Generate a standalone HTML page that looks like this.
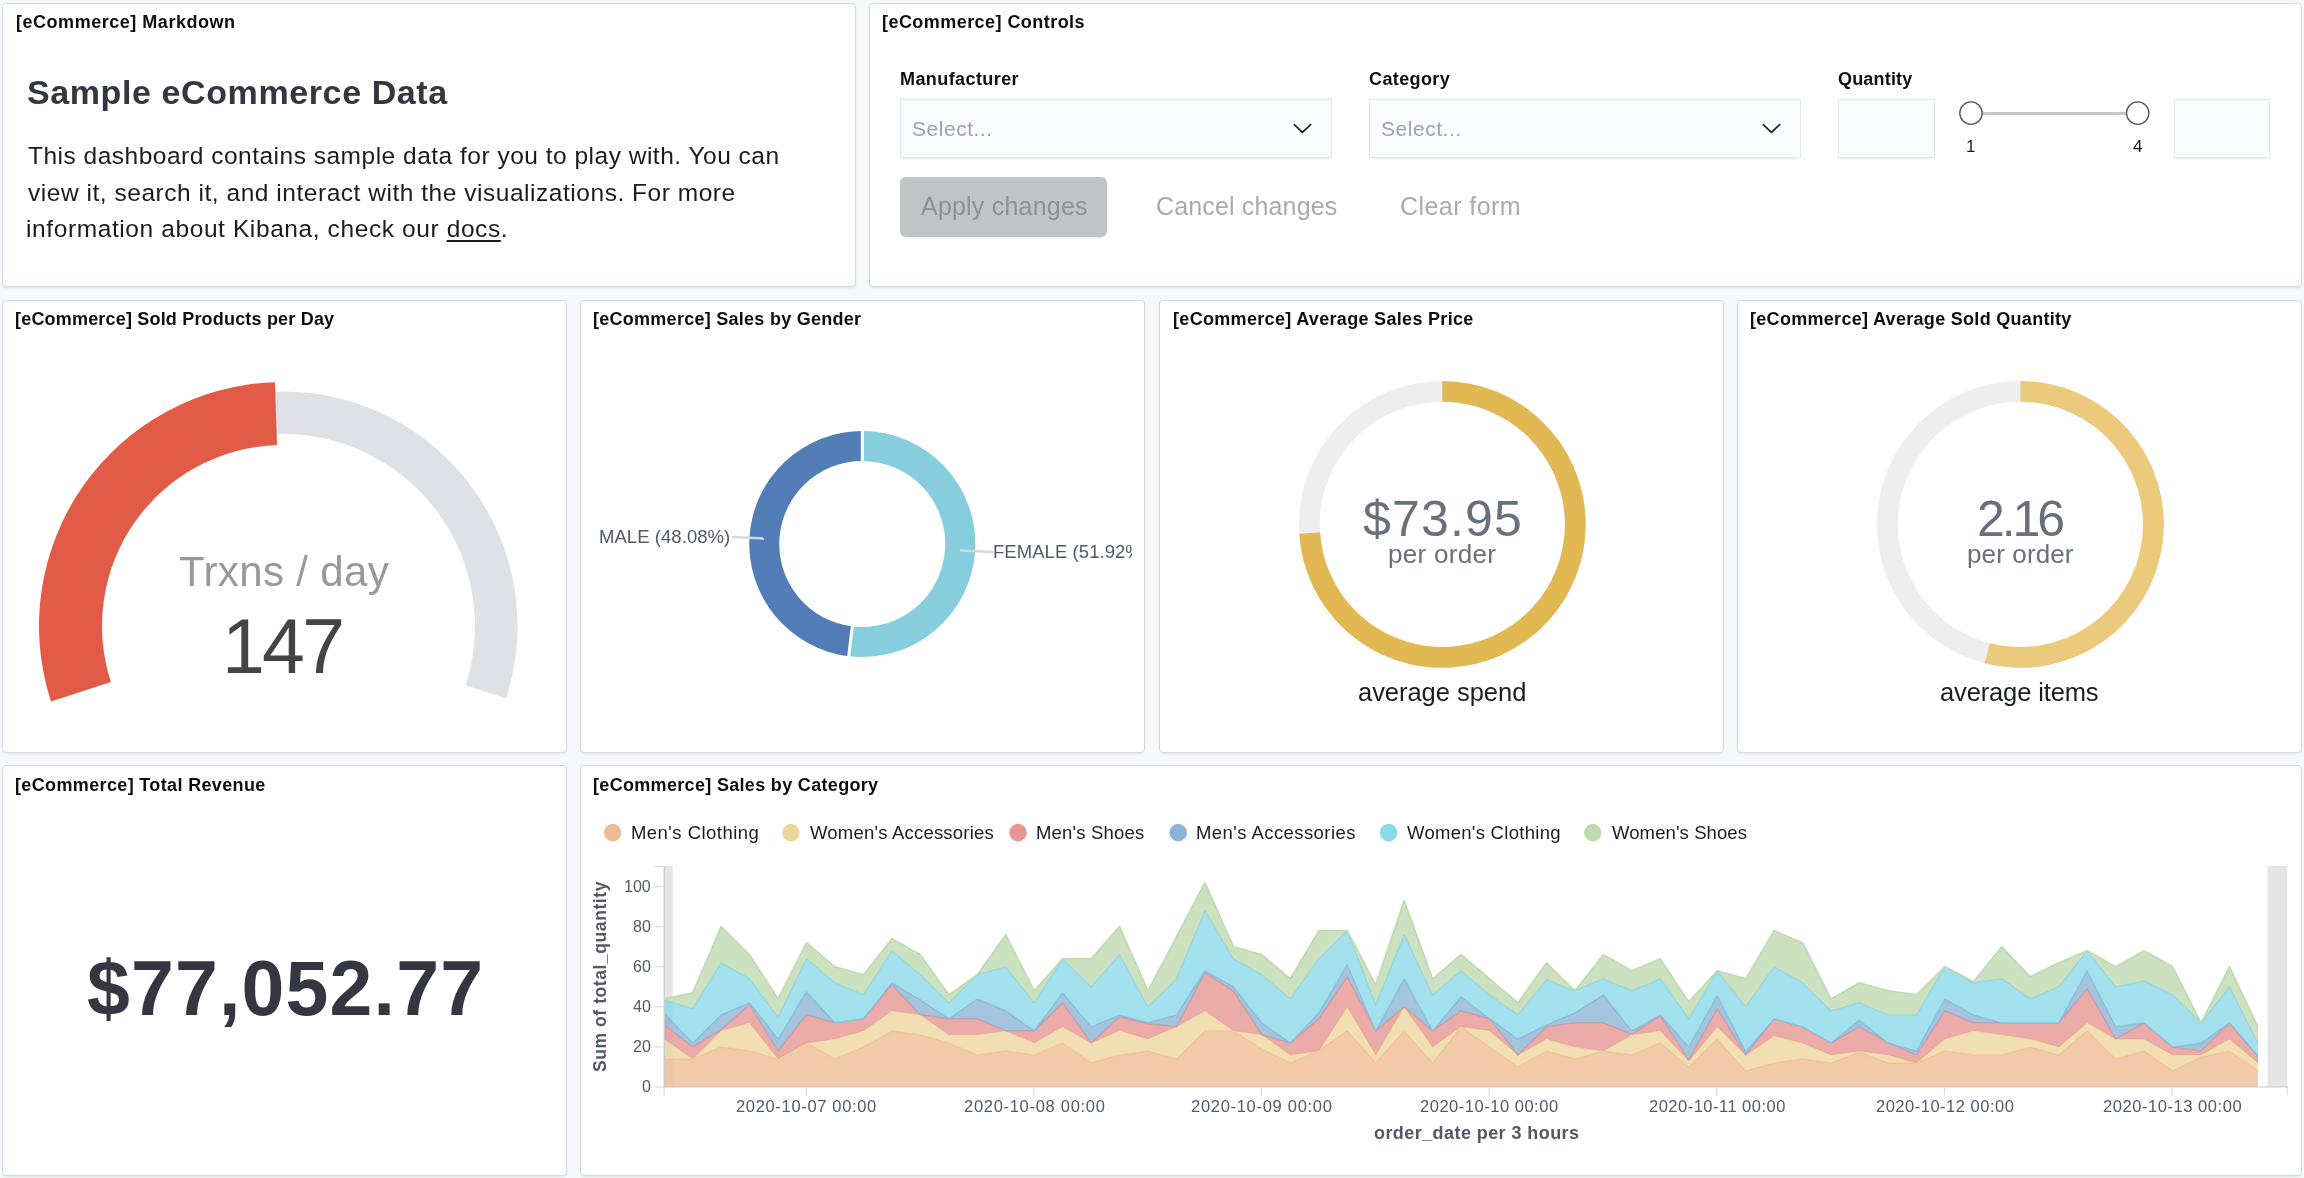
<!DOCTYPE html>
<html><head><meta charset="utf-8"><style>
html,body{margin:0;padding:0;width:2304px;height:1178px;overflow:hidden;background:#f7f8fb;}
body{position:relative;font-family:'Liberation Sans', sans-serif;}
.p{position:absolute;box-sizing:border-box;background:#fff;border:1px solid #d3dae6;border-radius:4px;box-shadow:0 1px 2px rgba(0,0,0,0.05),0 2px 3px -1px rgba(0,0,0,0.04);}
.t{position:absolute;will-change:transform;white-space:pre;line-height:1;font-family:'Liberation Sans', sans-serif;}
.in{position:absolute;box-sizing:border-box;background:#fbfcfd;box-shadow:inset 0 0 0 1px rgba(15,39,118,0.1),0 1px 1px -1px rgba(152,162,179,0.2),0 3px 2px -2px rgba(152,162,179,0.2);}
svg{position:absolute;left:0;top:0;}
</style></head><body>
<div class="p" style="left:2px;top:3px;width:854px;height:284px"></div><div class="p" style="left:869px;top:3px;width:1433px;height:284px"></div><div class="p" style="left:2px;top:300px;width:565px;height:453px"></div><div class="p" style="left:580px;top:300px;width:565px;height:453px"></div><div class="p" style="left:1159px;top:300px;width:565px;height:453px"></div><div class="p" style="left:1737px;top:300px;width:565px;height:453px"></div><div class="p" style="left:2px;top:765px;width:565px;height:411px"></div><div class="p" style="left:580px;top:765px;width:1722px;height:411px"></div>
<div class="in" style="left:900px;top:98.5px;width:432px;height:59.5px"></div><div class="in" style="left:1369px;top:98.5px;width:432px;height:59.5px"></div><div class="in" style="left:1838.3px;top:98.5px;width:96.29999999999995px;height:59.5px"></div><div class="in" style="left:2174px;top:98.5px;width:96.40000000000009px;height:59.5px"></div><div style="position:absolute;left:900px;top:177px;width:207px;height:60px;border-radius:6px;background:#c2c3c6;box-shadow:0 2px 2px -1px rgba(0,0,0,0.1)"></div>
<svg width="2304" height="1178" viewBox="0 0 2304 1178">
<path d="M59.98,698.46 A234.5,234.5 0 1 1 506.02,698.46 L465.60,685.33 A192,192 0 1 0 100.40,685.33 Z" fill="#e0e1e6"/><path d="M50.94,701.40 A244,244 0 0 1 274.91,382.13 L277.00,445.10 A181,181 0 0 0 110.86,681.93 Z" fill="#e25b47"/><path d="M862.30,431.00 A113,113 0 1 1 848.70,656.18 L852.31,626.40 A83,83 0 1 0 862.30,461.00 Z" fill="#86cede"/><path d="M848.70,656.18 A113,113 0 0 1 862.30,431.00 L862.30,461.00 A83,83 0 0 0 852.31,626.40 Z" fill="#527db7"/><line x1="862.30" y1="464.00" x2="862.30" y2="428.00" stroke="#fff" stroke-width="3"/><line x1="852.67" y1="623.42" x2="848.34" y2="659.16" stroke="#fff" stroke-width="3"/><polyline points="732,537 764,538.5" fill="none" stroke="#d5d8de" stroke-width="2.5"/><polyline points="960,550.4 993.4,552" fill="none" stroke="#d5d8de" stroke-width="2.5"/><circle cx="1442.3" cy="524.4" r="133" fill="none" stroke="#eeeeee" stroke-width="20.8"/><path d="M1442.30,381.00 A143.4,143.4 0 1 1 1299.21,533.85 L1319.97,532.48 A122.6,122.6 0 1 0 1442.30,401.80 Z" fill="#e2b852"/><circle cx="2020.4" cy="524.4" r="133" fill="none" stroke="#eeeeee" stroke-width="20.8"/><path d="M2020.40,381.00 A143.4,143.4 0 1 1 1984.74,663.29 L1989.91,643.15 A122.6,122.6 0 1 0 2020.40,401.80 Z" fill="#ecca7b"/><polyline points="1294.3,124.7 1302.4,132.4 1310.7,124.6" fill="none" stroke="#1a1c21" stroke-width="1.6" stroke-linecap="round" stroke-linejoin="round"/><polyline points="1763.3,124.7 1771.4,132.4 1779.7,124.6" fill="none" stroke="#1a1c21" stroke-width="1.6" stroke-linecap="round" stroke-linejoin="round"/><line x1="1982" y1="113.5" x2="2127" y2="113.5" stroke="#c6c8cc" stroke-width="3"/><circle cx="1971" cy="113.1" r="11.2" fill="#fff" stroke="#4d5361" stroke-width="1.3"/><circle cx="2137.7" cy="113.1" r="11.2" fill="#fff" stroke="#4d5361" stroke-width="1.3"/>
<rect x="664.2" y="866" width="8.5" height="221" fill="#000" fill-opacity="0.1"/><rect x="2267.5" y="866" width="19.8" height="221" fill="#000" fill-opacity="0.1"/><path d="M664.20,1058.93 L692.66,1058.93 L721.12,1046.90 L749.58,1050.91 L778.04,1058.93 L806.50,1042.89 L834.96,1058.93 L863.42,1046.90 L891.88,1030.86 L920.34,1034.87 L948.80,1042.89 L977.26,1054.92 L1005.72,1050.91 L1034.18,1054.92 L1062.64,1042.89 L1091.10,1062.94 L1119.56,1054.92 L1148.02,1050.91 L1176.48,1058.93 L1204.94,1030.86 L1233.40,1030.86 L1261.86,1048.90 L1290.32,1062.94 L1318.78,1050.91 L1347.24,1030.86 L1375.70,1062.94 L1404.16,1030.86 L1432.62,1062.94 L1461.08,1026.85 L1489.54,1046.90 L1518.00,1066.95 L1546.46,1050.91 L1574.92,1058.93 L1603.38,1050.91 L1631.84,1054.92 L1660.30,1042.89 L1688.76,1066.95 L1717.22,1038.88 L1745.68,1070.96 L1774.14,1062.94 L1802.60,1058.93 L1831.06,1062.94 L1859.52,1051.91 L1887.98,1062.94 L1916.44,1062.94 L1944.90,1050.91 L1973.36,1054.92 L2001.82,1054.92 L2030.28,1046.90 L2058.74,1054.92 L2087.20,1030.86 L2115.66,1058.93 L2144.12,1050.91 L2172.58,1070.96 L2201.04,1056.92 L2229.50,1050.91 L2257.96,1070.96 L2257.96,1087.00 L2229.50,1087.00 L2201.04,1087.00 L2172.58,1087.00 L2144.12,1087.00 L2115.66,1087.00 L2087.20,1087.00 L2058.74,1087.00 L2030.28,1087.00 L2001.82,1087.00 L1973.36,1087.00 L1944.90,1087.00 L1916.44,1087.00 L1887.98,1087.00 L1859.52,1087.00 L1831.06,1087.00 L1802.60,1087.00 L1774.14,1087.00 L1745.68,1087.00 L1717.22,1087.00 L1688.76,1087.00 L1660.30,1087.00 L1631.84,1087.00 L1603.38,1087.00 L1574.92,1087.00 L1546.46,1087.00 L1518.00,1087.00 L1489.54,1087.00 L1461.08,1087.00 L1432.62,1087.00 L1404.16,1087.00 L1375.70,1087.00 L1347.24,1087.00 L1318.78,1087.00 L1290.32,1087.00 L1261.86,1087.00 L1233.40,1087.00 L1204.94,1087.00 L1176.48,1087.00 L1148.02,1087.00 L1119.56,1087.00 L1091.10,1087.00 L1062.64,1087.00 L1034.18,1087.00 L1005.72,1087.00 L977.26,1087.00 L948.80,1087.00 L920.34,1087.00 L891.88,1087.00 L863.42,1087.00 L834.96,1087.00 L806.50,1087.00 L778.04,1087.00 L749.58,1087.00 L721.12,1087.00 L692.66,1087.00 L664.20,1087.00 Z" fill="#efbd95" fill-opacity="0.8" stroke="none"/><path d="M664.20,1058.93 L692.66,1058.93 L721.12,1046.90 L749.58,1050.91 L778.04,1058.93 L806.50,1042.89 L834.96,1058.93 L863.42,1046.90 L891.88,1030.86 L920.34,1034.87 L948.80,1042.89 L977.26,1054.92 L1005.72,1050.91 L1034.18,1054.92 L1062.64,1042.89 L1091.10,1062.94 L1119.56,1054.92 L1148.02,1050.91 L1176.48,1058.93 L1204.94,1030.86 L1233.40,1030.86 L1261.86,1048.90 L1290.32,1062.94 L1318.78,1050.91 L1347.24,1030.86 L1375.70,1062.94 L1404.16,1030.86 L1432.62,1062.94 L1461.08,1026.85 L1489.54,1046.90 L1518.00,1066.95 L1546.46,1050.91 L1574.92,1058.93 L1603.38,1050.91 L1631.84,1054.92 L1660.30,1042.89 L1688.76,1066.95 L1717.22,1038.88 L1745.68,1070.96 L1774.14,1062.94 L1802.60,1058.93 L1831.06,1062.94 L1859.52,1051.91 L1887.98,1062.94 L1916.44,1062.94 L1944.90,1050.91 L1973.36,1054.92 L2001.82,1054.92 L2030.28,1046.90 L2058.74,1054.92 L2087.20,1030.86 L2115.66,1058.93 L2144.12,1050.91 L2172.58,1070.96 L2201.04,1056.92 L2229.50,1050.91 L2257.96,1070.96" fill="none" stroke="#efbd95" stroke-width="1.5" stroke-linejoin="round"/><path d="M664.20,1038.88 L692.66,1058.93 L721.12,1030.86 L749.58,1022.84 L778.04,1058.93 L806.50,1042.89 L834.96,1038.88 L863.42,1030.86 L891.88,1010.81 L920.34,1014.82 L948.80,1034.87 L977.26,1034.87 L1005.72,1030.86 L1034.18,1042.89 L1062.64,1026.85 L1091.10,1042.89 L1119.56,1030.86 L1148.02,1038.88 L1176.48,1026.85 L1204.94,1010.81 L1233.40,1030.86 L1261.86,1034.87 L1290.32,1054.92 L1318.78,1050.91 L1347.24,1006.80 L1375.70,1054.92 L1404.16,1006.80 L1432.62,1046.90 L1461.08,1026.85 L1489.54,1030.86 L1518.00,1054.92 L1546.46,1038.88 L1574.92,1046.90 L1603.38,1050.91 L1631.84,1034.87 L1660.30,1030.86 L1688.76,1060.93 L1717.22,1026.85 L1745.68,1054.92 L1774.14,1035.87 L1802.60,1042.89 L1831.06,1054.92 L1859.52,1050.91 L1887.98,1054.92 L1916.44,1062.94 L1944.90,1038.88 L1973.36,1030.86 L2001.82,1034.87 L2030.28,1038.88 L2058.74,1046.90 L2087.20,1022.84 L2115.66,1038.88 L2144.12,1038.88 L2172.58,1054.92 L2201.04,1054.92 L2229.50,1038.88 L2257.96,1062.94 L2257.96,1070.96 L2229.50,1050.91 L2201.04,1056.92 L2172.58,1070.96 L2144.12,1050.91 L2115.66,1058.93 L2087.20,1030.86 L2058.74,1054.92 L2030.28,1046.90 L2001.82,1054.92 L1973.36,1054.92 L1944.90,1050.91 L1916.44,1062.94 L1887.98,1062.94 L1859.52,1051.91 L1831.06,1062.94 L1802.60,1058.93 L1774.14,1062.94 L1745.68,1070.96 L1717.22,1038.88 L1688.76,1066.95 L1660.30,1042.89 L1631.84,1054.92 L1603.38,1050.91 L1574.92,1058.93 L1546.46,1050.91 L1518.00,1066.95 L1489.54,1046.90 L1461.08,1026.85 L1432.62,1062.94 L1404.16,1030.86 L1375.70,1062.94 L1347.24,1030.86 L1318.78,1050.91 L1290.32,1062.94 L1261.86,1048.90 L1233.40,1030.86 L1204.94,1030.86 L1176.48,1058.93 L1148.02,1050.91 L1119.56,1054.92 L1091.10,1062.94 L1062.64,1042.89 L1034.18,1054.92 L1005.72,1050.91 L977.26,1054.92 L948.80,1042.89 L920.34,1034.87 L891.88,1030.86 L863.42,1046.90 L834.96,1058.93 L806.50,1042.89 L778.04,1058.93 L749.58,1050.91 L721.12,1046.90 L692.66,1058.93 L664.20,1058.93 Z" fill="#efd6a0" fill-opacity="0.8" stroke="none"/><path d="M664.20,1038.88 L692.66,1058.93 L721.12,1030.86 L749.58,1022.84 L778.04,1058.93 L806.50,1042.89 L834.96,1038.88 L863.42,1030.86 L891.88,1010.81 L920.34,1014.82 L948.80,1034.87 L977.26,1034.87 L1005.72,1030.86 L1034.18,1042.89 L1062.64,1026.85 L1091.10,1042.89 L1119.56,1030.86 L1148.02,1038.88 L1176.48,1026.85 L1204.94,1010.81 L1233.40,1030.86 L1261.86,1034.87 L1290.32,1054.92 L1318.78,1050.91 L1347.24,1006.80 L1375.70,1054.92 L1404.16,1006.80 L1432.62,1046.90 L1461.08,1026.85 L1489.54,1030.86 L1518.00,1054.92 L1546.46,1038.88 L1574.92,1046.90 L1603.38,1050.91 L1631.84,1034.87 L1660.30,1030.86 L1688.76,1060.93 L1717.22,1026.85 L1745.68,1054.92 L1774.14,1035.87 L1802.60,1042.89 L1831.06,1054.92 L1859.52,1050.91 L1887.98,1054.92 L1916.44,1062.94 L1944.90,1038.88 L1973.36,1030.86 L2001.82,1034.87 L2030.28,1038.88 L2058.74,1046.90 L2087.20,1022.84 L2115.66,1038.88 L2144.12,1038.88 L2172.58,1054.92 L2201.04,1054.92 L2229.50,1038.88 L2257.96,1062.94" fill="none" stroke="#efd6a0" stroke-width="1.5" stroke-linejoin="round"/><path d="M664.20,1024.85 L692.66,1046.90 L721.12,1029.66 L749.58,1004.79 L778.04,1050.91 L806.50,1014.82 L834.96,1022.84 L863.42,1018.83 L891.88,984.75 L920.34,1014.82 L948.80,1018.83 L977.26,1018.83 L1005.72,1030.86 L1034.18,1030.86 L1062.64,1002.79 L1091.10,1042.89 L1119.56,1016.83 L1148.02,1023.84 L1176.48,1026.85 L1204.94,972.72 L1233.40,990.76 L1261.86,1034.87 L1290.32,1042.89 L1318.78,1018.83 L1347.24,976.73 L1375.70,1030.86 L1404.16,1006.80 L1432.62,1030.86 L1461.08,1010.81 L1489.54,1018.83 L1518.00,1054.92 L1546.46,1026.85 L1574.92,1022.84 L1603.38,1022.84 L1631.84,1034.27 L1660.30,1015.82 L1688.76,1059.93 L1717.22,1008.81 L1745.68,1054.92 L1774.14,1018.83 L1802.60,1026.85 L1831.06,1042.89 L1859.52,1026.85 L1887.98,1042.89 L1916.44,1054.92 L1944.90,1010.81 L1973.36,1022.84 L2001.82,1022.84 L2030.28,1022.84 L2058.74,1022.84 L2087.20,988.75 L2115.66,1038.88 L2144.12,1022.84 L2172.58,1046.90 L2201.04,1050.91 L2229.50,1022.84 L2257.96,1056.92 L2257.96,1062.94 L2229.50,1038.88 L2201.04,1054.92 L2172.58,1054.92 L2144.12,1038.88 L2115.66,1038.88 L2087.20,1022.84 L2058.74,1046.90 L2030.28,1038.88 L2001.82,1034.87 L1973.36,1030.86 L1944.90,1038.88 L1916.44,1062.94 L1887.98,1054.92 L1859.52,1050.91 L1831.06,1054.92 L1802.60,1042.89 L1774.14,1035.87 L1745.68,1054.92 L1717.22,1026.85 L1688.76,1060.93 L1660.30,1030.86 L1631.84,1034.87 L1603.38,1050.91 L1574.92,1046.90 L1546.46,1038.88 L1518.00,1054.92 L1489.54,1030.86 L1461.08,1026.85 L1432.62,1046.90 L1404.16,1006.80 L1375.70,1054.92 L1347.24,1006.80 L1318.78,1050.91 L1290.32,1054.92 L1261.86,1034.87 L1233.40,1030.86 L1204.94,1010.81 L1176.48,1026.85 L1148.02,1038.88 L1119.56,1030.86 L1091.10,1042.89 L1062.64,1026.85 L1034.18,1042.89 L1005.72,1030.86 L977.26,1034.87 L948.80,1034.87 L920.34,1014.82 L891.88,1010.81 L863.42,1030.86 L834.96,1038.88 L806.50,1042.89 L778.04,1058.93 L749.58,1022.84 L721.12,1030.86 L692.66,1058.93 L664.20,1038.88 Z" fill="#e59693" fill-opacity="0.8" stroke="none"/><path d="M664.20,1024.85 L692.66,1046.90 L721.12,1029.66 L749.58,1004.79 L778.04,1050.91 L806.50,1014.82 L834.96,1022.84 L863.42,1018.83 L891.88,984.75 L920.34,1014.82 L948.80,1018.83 L977.26,1018.83 L1005.72,1030.86 L1034.18,1030.86 L1062.64,1002.79 L1091.10,1042.89 L1119.56,1016.83 L1148.02,1023.84 L1176.48,1026.85 L1204.94,972.72 L1233.40,990.76 L1261.86,1034.87 L1290.32,1042.89 L1318.78,1018.83 L1347.24,976.73 L1375.70,1030.86 L1404.16,1006.80 L1432.62,1030.86 L1461.08,1010.81 L1489.54,1018.83 L1518.00,1054.92 L1546.46,1026.85 L1574.92,1022.84 L1603.38,1022.84 L1631.84,1034.27 L1660.30,1015.82 L1688.76,1059.93 L1717.22,1008.81 L1745.68,1054.92 L1774.14,1018.83 L1802.60,1026.85 L1831.06,1042.89 L1859.52,1026.85 L1887.98,1042.89 L1916.44,1054.92 L1944.90,1010.81 L1973.36,1022.84 L2001.82,1022.84 L2030.28,1022.84 L2058.74,1022.84 L2087.20,988.75 L2115.66,1038.88 L2144.12,1022.84 L2172.58,1046.90 L2201.04,1050.91 L2229.50,1022.84 L2257.96,1056.92" fill="none" stroke="#e59693" stroke-width="1.5" stroke-linejoin="round"/><path d="M664.20,1012.82 L692.66,1042.89 L721.12,1014.82 L749.58,1002.79 L778.04,1038.88 L806.50,991.76 L834.96,1022.84 L863.42,1018.83 L891.88,982.74 L920.34,999.78 L948.80,1018.83 L977.26,998.78 L1005.72,1010.81 L1034.18,1030.86 L1062.64,992.76 L1091.10,1026.85 L1119.56,1014.82 L1148.02,1022.84 L1176.48,1014.82 L1204.94,970.71 L1233.40,986.75 L1261.86,1022.84 L1290.32,1042.89 L1318.78,1012.82 L1347.24,964.70 L1375.70,1030.86 L1404.16,978.73 L1432.62,1030.86 L1461.08,996.77 L1489.54,1018.83 L1518.00,1038.88 L1546.46,1024.85 L1574.92,1012.82 L1603.38,994.77 L1631.84,1030.86 L1660.30,1014.82 L1688.76,1046.90 L1717.22,995.17 L1745.68,1051.51 L1774.14,1018.83 L1802.60,1026.85 L1831.06,1042.89 L1859.52,1020.03 L1887.98,1042.89 L1916.44,1050.91 L1944.90,998.78 L1973.36,1014.82 L2001.82,1022.84 L2030.28,1022.84 L2058.74,1022.84 L2087.20,970.71 L2115.66,1026.85 L2144.12,1022.84 L2172.58,1046.90 L2201.04,1042.89 L2229.50,1022.84 L2257.96,1055.72 L2257.96,1056.92 L2229.50,1022.84 L2201.04,1050.91 L2172.58,1046.90 L2144.12,1022.84 L2115.66,1038.88 L2087.20,988.75 L2058.74,1022.84 L2030.28,1022.84 L2001.82,1022.84 L1973.36,1022.84 L1944.90,1010.81 L1916.44,1054.92 L1887.98,1042.89 L1859.52,1026.85 L1831.06,1042.89 L1802.60,1026.85 L1774.14,1018.83 L1745.68,1054.92 L1717.22,1008.81 L1688.76,1059.93 L1660.30,1015.82 L1631.84,1034.27 L1603.38,1022.84 L1574.92,1022.84 L1546.46,1026.85 L1518.00,1054.92 L1489.54,1018.83 L1461.08,1010.81 L1432.62,1030.86 L1404.16,1006.80 L1375.70,1030.86 L1347.24,976.73 L1318.78,1018.83 L1290.32,1042.89 L1261.86,1034.87 L1233.40,990.76 L1204.94,972.72 L1176.48,1026.85 L1148.02,1023.84 L1119.56,1016.83 L1091.10,1042.89 L1062.64,1002.79 L1034.18,1030.86 L1005.72,1030.86 L977.26,1018.83 L948.80,1018.83 L920.34,1014.82 L891.88,984.75 L863.42,1018.83 L834.96,1022.84 L806.50,1014.82 L778.04,1050.91 L749.58,1004.79 L721.12,1029.66 L692.66,1046.90 L664.20,1024.85 Z" fill="#8db4d5" fill-opacity="0.8" stroke="none"/><path d="M664.20,1012.82 L692.66,1042.89 L721.12,1014.82 L749.58,1002.79 L778.04,1038.88 L806.50,991.76 L834.96,1022.84 L863.42,1018.83 L891.88,982.74 L920.34,999.78 L948.80,1018.83 L977.26,998.78 L1005.72,1010.81 L1034.18,1030.86 L1062.64,992.76 L1091.10,1026.85 L1119.56,1014.82 L1148.02,1022.84 L1176.48,1014.82 L1204.94,970.71 L1233.40,986.75 L1261.86,1022.84 L1290.32,1042.89 L1318.78,1012.82 L1347.24,964.70 L1375.70,1030.86 L1404.16,978.73 L1432.62,1030.86 L1461.08,996.77 L1489.54,1018.83 L1518.00,1038.88 L1546.46,1024.85 L1574.92,1012.82 L1603.38,994.77 L1631.84,1030.86 L1660.30,1014.82 L1688.76,1046.90 L1717.22,995.17 L1745.68,1051.51 L1774.14,1018.83 L1802.60,1026.85 L1831.06,1042.89 L1859.52,1020.03 L1887.98,1042.89 L1916.44,1050.91 L1944.90,998.78 L1973.36,1014.82 L2001.82,1022.84 L2030.28,1022.84 L2058.74,1022.84 L2087.20,970.71 L2115.66,1026.85 L2144.12,1022.84 L2172.58,1046.90 L2201.04,1042.89 L2229.50,1022.84 L2257.96,1055.72" fill="none" stroke="#8db4d5" stroke-width="1.5" stroke-linejoin="round"/><path d="M664.20,999.78 L692.66,1008.81 L721.12,962.69 L749.58,978.73 L778.04,1016.83 L806.50,958.68 L834.96,982.74 L863.42,994.77 L891.88,950.66 L920.34,974.72 L948.80,1002.79 L977.26,974.72 L1005.72,966.70 L1034.18,1002.79 L1062.64,958.68 L1091.10,986.75 L1119.56,954.67 L1148.02,1006.80 L1176.48,978.73 L1204.94,910.56 L1233.40,958.68 L1261.86,974.72 L1290.32,998.78 L1318.78,958.68 L1347.24,930.61 L1375.70,1004.79 L1404.16,934.62 L1432.62,994.77 L1461.08,970.71 L1489.54,994.77 L1518.00,1014.82 L1546.46,979.73 L1574.92,990.76 L1603.38,978.73 L1631.84,990.76 L1660.30,978.73 L1688.76,1018.83 L1717.22,970.71 L1745.68,1006.80 L1774.14,966.70 L1802.60,982.74 L1831.06,1010.81 L1859.52,1002.79 L1887.98,1014.82 L1916.44,1014.82 L1944.90,966.70 L1973.36,982.74 L2001.82,978.73 L2030.28,998.78 L2058.74,986.75 L2087.20,950.66 L2115.66,986.75 L2144.12,980.74 L2172.58,994.77 L2201.04,1022.84 L2229.50,986.75 L2257.96,1042.89 L2257.96,1055.72 L2229.50,1022.84 L2201.04,1042.89 L2172.58,1046.90 L2144.12,1022.84 L2115.66,1026.85 L2087.20,970.71 L2058.74,1022.84 L2030.28,1022.84 L2001.82,1022.84 L1973.36,1014.82 L1944.90,998.78 L1916.44,1050.91 L1887.98,1042.89 L1859.52,1020.03 L1831.06,1042.89 L1802.60,1026.85 L1774.14,1018.83 L1745.68,1051.51 L1717.22,995.17 L1688.76,1046.90 L1660.30,1014.82 L1631.84,1030.86 L1603.38,994.77 L1574.92,1012.82 L1546.46,1024.85 L1518.00,1038.88 L1489.54,1018.83 L1461.08,996.77 L1432.62,1030.86 L1404.16,978.73 L1375.70,1030.86 L1347.24,964.70 L1318.78,1012.82 L1290.32,1042.89 L1261.86,1022.84 L1233.40,986.75 L1204.94,970.71 L1176.48,1014.82 L1148.02,1022.84 L1119.56,1014.82 L1091.10,1026.85 L1062.64,992.76 L1034.18,1030.86 L1005.72,1010.81 L977.26,998.78 L948.80,1018.83 L920.34,999.78 L891.88,982.74 L863.42,1018.83 L834.96,1022.84 L806.50,991.76 L778.04,1038.88 L749.58,1002.79 L721.12,1014.82 L692.66,1042.89 L664.20,1012.82 Z" fill="#8bd8ea" fill-opacity="0.8" stroke="none"/><path d="M664.20,999.78 L692.66,1008.81 L721.12,962.69 L749.58,978.73 L778.04,1016.83 L806.50,958.68 L834.96,982.74 L863.42,994.77 L891.88,950.66 L920.34,974.72 L948.80,1002.79 L977.26,974.72 L1005.72,966.70 L1034.18,1002.79 L1062.64,958.68 L1091.10,986.75 L1119.56,954.67 L1148.02,1006.80 L1176.48,978.73 L1204.94,910.56 L1233.40,958.68 L1261.86,974.72 L1290.32,998.78 L1318.78,958.68 L1347.24,930.61 L1375.70,1004.79 L1404.16,934.62 L1432.62,994.77 L1461.08,970.71 L1489.54,994.77 L1518.00,1014.82 L1546.46,979.73 L1574.92,990.76 L1603.38,978.73 L1631.84,990.76 L1660.30,978.73 L1688.76,1018.83 L1717.22,970.71 L1745.68,1006.80 L1774.14,966.70 L1802.60,982.74 L1831.06,1010.81 L1859.52,1002.79 L1887.98,1014.82 L1916.44,1014.82 L1944.90,966.70 L1973.36,982.74 L2001.82,978.73 L2030.28,998.78 L2058.74,986.75 L2087.20,950.66 L2115.66,986.75 L2144.12,980.74 L2172.58,994.77 L2201.04,1022.84 L2229.50,986.75 L2257.96,1042.89" fill="none" stroke="#8bd8ea" stroke-width="1.5" stroke-linejoin="round"/><path d="M664.20,998.78 L692.66,992.76 L721.12,926.60 L749.58,954.67 L778.04,998.78 L806.50,942.64 L834.96,966.70 L863.42,974.72 L891.88,938.63 L920.34,954.67 L948.80,994.77 L977.26,974.72 L1005.72,934.62 L1034.18,990.76 L1062.64,958.68 L1091.10,958.68 L1119.56,926.60 L1148.02,990.76 L1176.48,936.62 L1204.94,882.49 L1233.40,946.65 L1261.86,954.67 L1290.32,978.73 L1318.78,930.61 L1347.24,930.61 L1375.70,984.75 L1404.16,900.53 L1432.62,978.73 L1461.08,954.67 L1489.54,978.73 L1518.00,1002.79 L1546.46,962.69 L1574.92,990.76 L1603.38,954.67 L1631.84,970.71 L1660.30,958.68 L1688.76,1001.79 L1717.22,970.71 L1745.68,978.73 L1774.14,930.61 L1802.60,942.64 L1831.06,998.78 L1859.52,982.74 L1887.98,990.76 L1916.44,994.77 L1944.90,966.70 L1973.36,981.74 L2001.82,946.65 L2030.28,976.73 L2058.74,962.69 L2087.20,950.66 L2115.66,966.70 L2144.12,950.66 L2172.58,966.70 L2201.04,1022.84 L2229.50,966.70 L2257.96,1026.85 L2257.96,1042.89 L2229.50,986.75 L2201.04,1022.84 L2172.58,994.77 L2144.12,980.74 L2115.66,986.75 L2087.20,950.66 L2058.74,986.75 L2030.28,998.78 L2001.82,978.73 L1973.36,982.74 L1944.90,966.70 L1916.44,1014.82 L1887.98,1014.82 L1859.52,1002.79 L1831.06,1010.81 L1802.60,982.74 L1774.14,966.70 L1745.68,1006.80 L1717.22,970.71 L1688.76,1018.83 L1660.30,978.73 L1631.84,990.76 L1603.38,978.73 L1574.92,990.76 L1546.46,979.73 L1518.00,1014.82 L1489.54,994.77 L1461.08,970.71 L1432.62,994.77 L1404.16,934.62 L1375.70,1004.79 L1347.24,930.61 L1318.78,958.68 L1290.32,998.78 L1261.86,974.72 L1233.40,958.68 L1204.94,910.56 L1176.48,978.73 L1148.02,1006.80 L1119.56,954.67 L1091.10,986.75 L1062.64,958.68 L1034.18,1002.79 L1005.72,966.70 L977.26,974.72 L948.80,1002.79 L920.34,974.72 L891.88,950.66 L863.42,994.77 L834.96,982.74 L806.50,958.68 L778.04,1016.83 L749.58,978.73 L721.12,962.69 L692.66,1008.81 L664.20,999.78 Z" fill="#bedaaf" fill-opacity="0.8" stroke="none"/><path d="M664.20,998.78 L692.66,992.76 L721.12,926.60 L749.58,954.67 L778.04,998.78 L806.50,942.64 L834.96,966.70 L863.42,974.72 L891.88,938.63 L920.34,954.67 L948.80,994.77 L977.26,974.72 L1005.72,934.62 L1034.18,990.76 L1062.64,958.68 L1091.10,958.68 L1119.56,926.60 L1148.02,990.76 L1176.48,936.62 L1204.94,882.49 L1233.40,946.65 L1261.86,954.67 L1290.32,978.73 L1318.78,930.61 L1347.24,930.61 L1375.70,984.75 L1404.16,900.53 L1432.62,978.73 L1461.08,954.67 L1489.54,978.73 L1518.00,1002.79 L1546.46,962.69 L1574.92,990.76 L1603.38,954.67 L1631.84,970.71 L1660.30,958.68 L1688.76,1001.79 L1717.22,970.71 L1745.68,978.73 L1774.14,930.61 L1802.60,942.64 L1831.06,998.78 L1859.52,982.74 L1887.98,990.76 L1916.44,994.77 L1944.90,966.70 L1973.36,981.74 L2001.82,946.65 L2030.28,976.73 L2058.74,962.69 L2087.20,950.66 L2115.66,966.70 L2144.12,950.66 L2172.58,966.70 L2201.04,1022.84 L2229.50,966.70 L2257.96,1026.85" fill="none" stroke="#bedaaf" stroke-width="1.5" stroke-linejoin="round"/><line x1="664.2" y1="866.5" x2="664.2" y2="1087" stroke="#c8c9cb" stroke-width="1.2"/><line x1="664.2" y1="1087" x2="2287.3" y2="1087" stroke="#c8c9cb" stroke-width="1.2"/><line x1="655" y1="1087.00" x2="664.2" y2="1087.00" stroke="#d9dadc" stroke-width="1.2"/><line x1="655" y1="1046.90" x2="664.2" y2="1046.90" stroke="#d9dadc" stroke-width="1.2"/><line x1="655" y1="1006.80" x2="664.2" y2="1006.80" stroke="#d9dadc" stroke-width="1.2"/><line x1="655" y1="966.70" x2="664.2" y2="966.70" stroke="#d9dadc" stroke-width="1.2"/><line x1="655" y1="926.60" x2="664.2" y2="926.60" stroke="#d9dadc" stroke-width="1.2"/><line x1="655" y1="886.50" x2="664.2" y2="886.50" stroke="#d9dadc" stroke-width="1.2"/><line x1="655" y1="866.50" x2="664.2" y2="866.50" stroke="#d9dadc" stroke-width="1.2"/><line x1="664.20" y1="1087" x2="664.20" y2="1095.5" stroke="#d9dadc" stroke-width="1.2"/><line x1="806.25" y1="1087" x2="806.25" y2="1095.5" stroke="#d9dadc" stroke-width="1.2"/><line x1="1033.90" y1="1087" x2="1033.90" y2="1095.5" stroke="#d9dadc" stroke-width="1.2"/><line x1="1261.55" y1="1087" x2="1261.55" y2="1095.5" stroke="#d9dadc" stroke-width="1.2"/><line x1="1489.20" y1="1087" x2="1489.20" y2="1095.5" stroke="#d9dadc" stroke-width="1.2"/><line x1="1716.85" y1="1087" x2="1716.85" y2="1095.5" stroke="#d9dadc" stroke-width="1.2"/><line x1="1944.50" y1="1087" x2="1944.50" y2="1095.5" stroke="#d9dadc" stroke-width="1.2"/><line x1="2172.15" y1="1087" x2="2172.15" y2="1095.5" stroke="#d9dadc" stroke-width="1.2"/><line x1="2287.30" y1="1087" x2="2287.30" y2="1095.5" stroke="#d9dadc" stroke-width="1.2"/><circle cx="612.6" cy="832.6" r="8.8" fill="#efbd95"/><circle cx="790.9" cy="832.6" r="8.8" fill="#efd6a0"/><circle cx="1018" cy="832.6" r="8.8" fill="#e59693"/><circle cx="1178.2" cy="832.6" r="8.8" fill="#8db4d5"/><circle cx="1388.6" cy="832.6" r="8.8" fill="#8bd8ea"/><circle cx="1592.8" cy="832.6" r="8.8" fill="#bedaaf"/>
</svg>
<div class="t" style="left:16.00px;top:13.00px;font-size:18px;font-weight:700;color:#0d0e11;letter-spacing:0.526px;">[eCommerce] Markdown</div><div class="t" style="left:881.50px;top:13.00px;font-size:18px;font-weight:700;color:#0d0e11;letter-spacing:0.447px;">[eCommerce] Controls</div><div class="t" style="left:15.40px;top:310.00px;font-size:18px;font-weight:700;color:#0d0e11;letter-spacing:0.188px;">[eCommerce] Sold Products per Day</div><div class="t" style="left:593.10px;top:310.00px;font-size:18px;font-weight:700;color:#0d0e11;letter-spacing:0.269px;">[eCommerce] Sales by Gender</div><div class="t" style="left:1172.50px;top:310.00px;font-size:18px;font-weight:700;color:#0d0e11;letter-spacing:0.317px;">[eCommerce] Average Sales Price</div><div class="t" style="left:1750.00px;top:310.00px;font-size:18px;font-weight:700;color:#0d0e11;letter-spacing:0.300px;">[eCommerce] Average Sold Quantity</div><div class="t" style="left:15.00px;top:776.00px;font-size:18px;font-weight:700;color:#0d0e11;letter-spacing:0.358px;">[eCommerce] Total Revenue</div><div class="t" style="left:593.00px;top:776.00px;font-size:18px;font-weight:700;color:#0d0e11;letter-spacing:0.321px;">[eCommerce] Sales by Category</div><div class="t" style="left:27.00px;top:74.70px;font-size:34px;font-weight:700;color:#343741;letter-spacing:0.600px;">Sample eCommerce Data</div><div class="t" style="left:28.00px;top:144.30px;font-size:24.5px;font-weight:400;color:#1a1c21;letter-spacing:0.500px;">This dashboard contains sample data for you to play with. You can</div><div class="t" style="left:28.00px;top:180.70px;font-size:24.5px;font-weight:400;color:#1a1c21;letter-spacing:0.531px;">view it, search it, and interact with the visualizations. For more</div><div class="t" style="left:26.00px;top:216.80px;font-size:24.5px;font-weight:400;color:#1a1c21;letter-spacing:0.600px;">information about Kibana, check our <span style="text-decoration:underline;text-underline-offset:3px">docs</span>.</div><div class="t" style="left:899.70px;top:69.80px;font-size:18px;font-weight:700;color:#0d0e11;letter-spacing:0.418px;">Manufacturer</div><div class="t" style="left:1368.60px;top:69.80px;font-size:18px;font-weight:700;color:#0d0e11;letter-spacing:0.386px;">Category</div><div class="t" style="left:1837.75px;top:70.00px;font-size:18px;font-weight:700;color:#0d0e11;letter-spacing:0.179px;">Quantity</div><div class="t" style="left:912.00px;top:118.20px;font-size:21px;font-weight:400;color:#98a2b3;letter-spacing:0.537px;">Select...</div><div class="t" style="left:1381.00px;top:118.20px;font-size:21px;font-weight:400;color:#98a2b3;letter-spacing:0.537px;">Select...</div><div class="t" style="left:1966.00px;top:138.30px;font-size:17px;font-weight:400;color:#1a1c21;letter-spacing:0.000px;">1</div><div class="t" style="left:2133.20px;top:138.30px;font-size:17px;font-weight:400;color:#1a1c21;letter-spacing:0.000px;">4</div><div class="t" style="left:920.70px;top:193.60px;font-size:25px;font-weight:400;color:#8e9095;letter-spacing:0.208px;">Apply changes</div><div class="t" style="left:1156.00px;top:193.60px;font-size:25px;font-weight:400;color:#a9abaf;letter-spacing:0.154px;">Cancel changes</div><div class="t" style="left:1400.00px;top:193.60px;font-size:25px;font-weight:400;color:#a9abaf;letter-spacing:0.444px;">Clear form</div><div class="t" style="left:179.40px;top:550.50px;font-size:42px;font-weight:400;color:#999999;letter-spacing:0.360px;">Trxns / day</div><div class="t" style="left:221.80px;top:608.20px;font-size:77px;font-weight:400;color:#444444;letter-spacing:-2.700px;">147</div><div class="t" style="left:599.00px;top:528.00px;font-size:18.5px;font-weight:400;color:#535966;letter-spacing:0.058px;">MALE (48.08%)</div><div class="t" style="left:1363.00px;top:493.70px;font-size:50px;font-weight:400;color:#69707d;letter-spacing:1.200px;">$73.95</div><div class="t" style="left:1388.00px;top:541.20px;font-size:26px;font-weight:400;color:#69707d;letter-spacing:0.312px;">per order</div><div class="t" style="left:1357.90px;top:679.80px;font-size:25.5px;font-weight:400;color:#1a1c21;letter-spacing:-0.033px;">average spend</div><div class="t" style="left:1976.60px;top:493.70px;font-size:50px;font-weight:400;color:#69707d;letter-spacing:-3.100px;">2.16</div><div class="t" style="left:1966.50px;top:541.20px;font-size:26px;font-weight:400;color:#69707d;letter-spacing:0.125px;">per order</div><div class="t" style="left:1940.00px;top:679.80px;font-size:25.5px;font-weight:400;color:#1a1c21;letter-spacing:-0.133px;">average items</div><div class="t" style="left:87.00px;top:949.70px;font-size:77px;font-weight:700;color:#343741;letter-spacing:1.178px;">$77,052.77</div><div class="t" style="left:630.50px;top:824.40px;font-size:18.5px;font-weight:400;color:#1a1c21;letter-spacing:0.462px;">Men's Clothing</div><div class="t" style="left:810.30px;top:824.40px;font-size:18.5px;font-weight:400;color:#1a1c21;letter-spacing:0.206px;">Women's Accessories</div><div class="t" style="left:1036.00px;top:824.40px;font-size:18.5px;font-weight:400;color:#1a1c21;letter-spacing:0.180px;">Men's Shoes</div><div class="t" style="left:1196.00px;top:824.40px;font-size:18.5px;font-weight:400;color:#1a1c21;letter-spacing:0.425px;">Men's Accessories</div><div class="t" style="left:1407.40px;top:824.40px;font-size:18.5px;font-weight:400;color:#1a1c21;letter-spacing:0.287px;">Women's Clothing</div><div class="t" style="left:1611.80px;top:824.40px;font-size:18.5px;font-weight:400;color:#1a1c21;letter-spacing:0.100px;">Women's Shoes</div><div class="t" style="left:641.50px;top:1079.00px;font-size:16px;font-weight:400;color:#535966;letter-spacing:0.000px;">0</div><div class="t" style="left:632.50px;top:1038.90px;font-size:16px;font-weight:400;color:#535966;letter-spacing:0.000px;">20</div><div class="t" style="left:632.50px;top:998.80px;font-size:16px;font-weight:400;color:#535966;letter-spacing:0.000px;">40</div><div class="t" style="left:632.50px;top:958.70px;font-size:16px;font-weight:400;color:#535966;letter-spacing:0.000px;">60</div><div class="t" style="left:632.50px;top:918.60px;font-size:16px;font-weight:400;color:#535966;letter-spacing:0.000px;">80</div><div class="t" style="left:623.50px;top:878.50px;font-size:16px;font-weight:400;color:#535966;letter-spacing:0.000px;">100</div><div class="t" style="left:736.25px;top:1098.40px;font-size:16.5px;font-weight:400;color:#535966;letter-spacing:0.667px;">2020-10-07 00:00</div><div class="t" style="left:963.60px;top:1098.40px;font-size:16.5px;font-weight:400;color:#535966;letter-spacing:0.707px;">2020-10-08 00:00</div><div class="t" style="left:1191.25px;top:1098.40px;font-size:16.5px;font-weight:400;color:#535966;letter-spacing:0.707px;">2020-10-09 00:00</div><div class="t" style="left:1420.30px;top:1098.40px;font-size:16.5px;font-weight:400;color:#535966;letter-spacing:0.520px;">2020-10-10 00:00</div><div class="t" style="left:1649.20px;top:1098.40px;font-size:16.5px;font-weight:400;color:#535966;letter-spacing:0.487px;">2020-10-11 00:00</div><div class="t" style="left:1875.70px;top:1098.40px;font-size:16.5px;font-weight:400;color:#535966;letter-spacing:0.507px;">2020-10-12 00:00</div><div class="t" style="left:2103.00px;top:1098.40px;font-size:16.5px;font-weight:400;color:#535966;letter-spacing:0.553px;">2020-10-13 00:00</div><div class="t" style="left:1373.50px;top:1124.00px;font-size:18px;font-weight:700;color:#535966;letter-spacing:0.429px;">order_date per 3 hours</div>
<div style="position:absolute;left:980px;top:530px;width:152px;height:40px;overflow:hidden"><div class="t" id="fem" style="left:13.00px;top:13.00px;font-size:18.5px;color:#535966;letter-spacing:0.058px">FEMALE (51.92%)</div></div>
<div class="t" style="left:591.50px;top:1072.20px;font-size:17.5px;font-weight:700;color:#535966;letter-spacing:0.575px;transform-origin:0 0;transform:rotate(-90deg)">Sum of total_quantity</div>
</body></html>
